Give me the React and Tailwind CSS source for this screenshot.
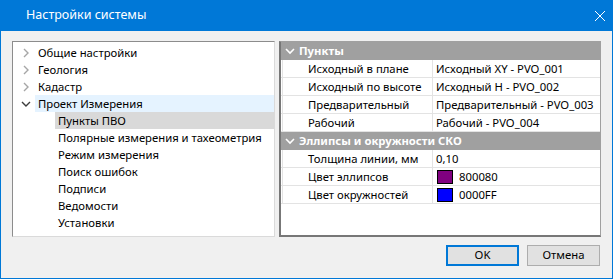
import React from "react";

const font = { fontFamily: '"Noto Sans", "Open Sans", sans-serif' };

function Chevron({ open, className = "" }) {
  return open ? (
    <svg width="10" height="8" viewBox="0 0 10 8" className={className}>
      <polyline points="1,2 5,6 9,2" fill="none" stroke="#3c3c3c" strokeWidth="1.4" />
    </svg>
  ) : (
    <svg width="8" height="10" viewBox="0 0 8 10" className={className}>
      <polyline points="2,1 6,5 2,9" fill="none" stroke="#a6a6a6" strokeWidth="1.4" />
    </svg>
  );
}

const tree = [
  { label: "Общие настройки", level: 0 },
  { label: "Геология", level: 0 },
  { label: "Кадастр", level: 0 },
  { label: "Проект Измерения", level: 0, open: true, hover: true },
  { label: "Пункты ПВО", level: 1, selected: true },
  { label: "Полярные измерения и тахеометрия", level: 1 },
  { label: "Режим измерения", level: 1 },
  { label: "Поиск ошибок", level: 1 },
  { label: "Подписи", level: 1 },
  { label: "Ведомости", level: 1 },
  { label: "Установки", level: 1 },
];

const groups = [
  {
    title: "Пункты",
    rows: [
      ["Исходный в плане", "Исходный XY - PVO_001"],
      ["Исходный по высоте", "Исходный H - PVO_002"],
      ["Предварительный", "Предварительный - PVO_003"],
      ["Рабочий", "Рабочий - PVO_004"],
    ],
  },
  {
    title: "Эллипсы и окружности СКО",
    rows: [
      ["Толщина линии, мм", "0,10"],
      ["Цвет эллипсов", "800080", "bg-[#800080]"],
      ["Цвет окружностей", "0000FF", "bg-[#0000ff]"],
    ],
  },
];

export default function App() {
  return (
    <div className="w-[613px] h-[279px] flex flex-col text-[11.3px] text-black whitespace-nowrap" style={font}>
      {/* title bar */}
      <div className="h-[31px] bg-[#0078d7] flex items-center justify-between pl-[26px] pr-[4px] text-white">
        <span className="text-[12.5px]">Настройки системы</span>
        <svg width="12" height="12" viewBox="0 0 12 12" className="mr-[3px]">
          <path d="M1 1 L11 11 M11 1 L1 11" stroke="white" strokeWidth="1" />
        </svg>
      </div>

      <div className="flex-1 bg-[#f0f0f0] border-x border-b border-[#0078d7] flex flex-col pt-[10px] pl-[11px] pr-[11px]">
        <div className="flex gap-[4px] h-[196px]">
          {/* tree */}
          <div className="w-[263px] bg-white border-l border-t border-[#8c8c8c] border-r border-b border-r-[#dadada] border-b-[#dadada] pt-[2px] overflow-hidden">
            {tree.map((t) => (
              <div key={t.label} className="h-[17px] flex items-center">
                <div className={`${t.level ? "w-[42px]" : "w-[22px]"} shrink-0 flex justify-center pl-[4px]`}>
                  {t.level === 0 && <Chevron open={t.open} />}
                </div>
                <div
                  className={`flex-1 h-full flex items-center pl-[3px] ${
                    t.hover ? "bg-[#e5f3ff]" : t.selected ? "bg-[#d9d9d9]" : ""
                  }`}
                >
                  <span className="leading-none">{t.label}</span>
                </div>
              </div>
            ))}
          </div>

          {/* property grid */}
          <div className="flex-1 bg-white border-l-2 border-b-2 border-t border-r border-[#777777] border-r-[#a0a0a0] border-t-[#a0a0a0] overflow-hidden">
            {groups.map((g) => (
              <div key={g.title}>
                <div className="h-[18px] bg-[#a0a0a0] flex items-center text-white font-bold pl-[4px] gap-[4px]">
                  <svg width="10" height="8" viewBox="0 0 10 8">
                    <polyline points="1,2 5,6 9,2" fill="none" stroke="white" strokeWidth="1.6" />
                  </svg>
                  <span className="leading-none">{g.title}</span>
                </div>
                {g.rows.map(([k, v, sw]) => (
                  <div key={k} className="h-[18px] flex border-b border-[#e3e3e3] pl-[1px]">
                    <div className="w-[151px] shrink-0 border-l border-[#e3e3e3] border-r pl-[25px] flex items-center">
                      <span className="leading-none">{k}</span>
                    </div>
                    <div className="flex-1 flex items-center pl-[3px]">
                      {sw && <span className={`w-[16px] h-[14px] border border-black ${sw} mr-[6px] ml-[1px]`} />}
                      <span className="leading-none">{v}</span>
                    </div>
                  </div>
                ))}
              </div>
            ))}
          </div>
        </div>

        {/* buttons */}
        <div className="flex justify-end gap-[8px] mt-[8px] pr-[1px]">
          <button className="w-[73px] h-[21px] bg-[#e1e1e1] border-2 border-[#0078d7] flex items-center justify-center">
            OK
          </button>
          <button className="w-[73px] h-[21px] bg-[#e1e1e1] border border-[#adadad] flex items-center justify-center">
            Отмена
          </button>
        </div>
      </div>
    </div>
  );
}
